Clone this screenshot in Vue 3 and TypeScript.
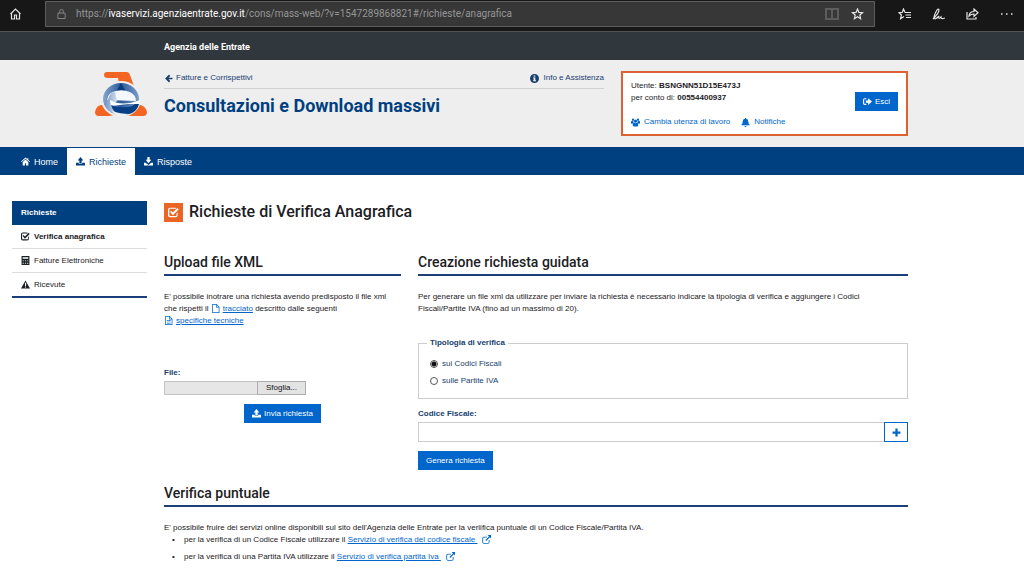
<script setup lang="ts">
import { h, ref } from 'vue'

const kind = ref<'cf' | 'iva'>('cf')
const code = ref('')

const paths: Record<string, string> = {
  left: 'M15 6.500H8l3-3L9 1 2 8l7 7 2-2.500-3-3h7z',
  home: 'M8 1 0 8l1 1 7-6 7 6 1-1-3-2.600V2h-2v1.600zM3 9v6h4v-4h2v4h4V9L8 4.600z',
  upload: 'M8 0 3 6h3v5h4V6h3zM0 10v5h16v-5h-5v2H5v-2z',
  download: 'M6 0v5H3l5 6 5-6h-3V0zM0 10v5h16v-5h-3l-5 4-5-4z',
  info: 'M8 0a8 8 0 1 0 0 16A8 8 0 0 0 8 0zM6.500 2.500h3v2.500h-3zM5.500 6h4v5h1.200v2H5.500v-2h1V8h-1z',
  users: 'M3.500 1a2 2 0 1 1 0 4 2 2 0 0 1 0-4zM12.500 1a2 2 0 1 1 0 4 2 2 0 0 1 0-4zM8 2.500a3 3 0 1 1 0 6 3 3 0 0 1 0-6zM0 9V7q0-2 2-2l2 .5Q4 8 5 9q-2 0-2.500 1H1q-1 0-1-1zM16 9V7q0-2-2-2l-2 .5q0 2.500-1 3.500 2 0 2.500 1H15q1 0 1-1zM3 13q0-4 2.500-4.500Q8 10 10.500 8.500 13 9 13 13q0 2-2 2H5q-2 0-2-2z',
  bell: 'M7 0h2v1.500q4 .5 4 5 0 4 2.500 5.500V13H.5v-1Q3 10.500 3 6.500q0-4.500 4-5zM6 14h4q-.3 2-2 2t-2-2z',
  exit: 'M6 2H3Q0 2 0 5v6q0 3 3 3h3v-2H3q-1 0-1-1V5q0-1 1-1h3zM9 2v4H5v4h4v4l7-6z',
  warn: 'M8 1 0 15h16zM7 5h2.200L9 10.500H7.200zM7 11.500h2v2H7z',
  calc: 'M1 0h14v16H1zM3 2v3h10V2zM3 7v1h2V7zM7 7v1h2V7zM11 7v1h2V7zM3 10v1h2v-1zM7 10v1h2v-1zM11 10v1h2v-1zM3 13v1h2v-1zM7 13v1h2v-1zM11 13v1h2v-1z',
  plus: 'M6 1h4v5h5v4h-5v5H6v-5H1V6h5z',
  check: 'M3 1h8l1 1-1 .5H3Q2 2.500 2 3.500v8q0 1.500 1.500 1.500H11q1.500 0 1.500-1.500V9L14 7.500V12q0 3-3 3H3q-3 0-3-3V4q0-3 3-3zM3 7l1.500-1.500L7 8l6.500-6.500L15.500 3.500 7 12z',
  file: 'M2 0h8l5 5v11H2zM3.300 1.300v13.400h10.400V6.300H9V1.300zM10.200 1.800V5h3.200z',
  doc: 'M2 0h8l5 5v11H2zM3.300 1.300v13.400h10.400V6.300H9V1.300zM10.200 1.800V5h3.200zM5 7.500h7v1.200H5zM5 10h7v1.200H5zM5 12.300h7v1.200H5z',
  ext: 'M3 3h6v1.500H3.500Q2 4.500 2 6v6.500Q2 14 3.500 14h7q1.500 0 1.500-1.500V9h1.500v3.500q0 3-3 3h-7q-3 0-3-3V6q0-3 2.500-3zM10 0h6v6l-2-2-6.500 6.500-1.500-1.500L12.500 2.500z',
}

const Icon = (props: { name: string }) => h('svg', { class: 'icon', viewBox: '0 0 16 16', 'aria-hidden': 'true' }, [
  h('path', { d: paths[props.name], 'fill-rule': 'evenodd', fill: 'currentColor' }),
])
Icon.props = ['name']

const menu = [
  { icon: 'check', label: 'Verifica anagrafica', active: true },
  { icon: 'calc', label: 'Fatture Elettroniche', active: false },
  { icon: 'warn', label: 'Ricevute', active: false },
]
</script>

<template>
  <div class="page">
    <div class="browser">
      <button class="tool home" aria-label="Home">
        <svg viewBox="0 0 12 12"><path d="M1 6 6 1l5 5M2 5v6h3V7h2v4h3V5" /></svg>
      </button>
      <div class="address">
        <svg class="lock" viewBox="0 0 10 12"><path d="M1 5h8v6H1zM3 5V3q0-2 2-2t2 2v2" /></svg>
        <span class="url">https://<b>ivaservizi.agenziaentrate.gov.it</b>/cons/mass-web/?v=1547289868821#/richieste/anagrafica</span>
        <svg class="book" viewBox="0 0 14 12"><path d="M1 1h12v10H1zM7 1v10" /></svg>
        <button class="tool" aria-label="Preferiti">
          <svg viewBox="0 0 12 12"><path d="m6 1 1.400 3.400L11 4.700 8.300 7l.8 3.700L6 8.800l-3.100 1.900L3.700 7 1 4.700l3.600-.3z" /></svg>
        </button>
      </div>
      <div class="tools">
        <button class="tool" aria-label="Hub">
          <svg viewBox="0 0 13 12"><path d="M7 4.400 5.500 1 4.200 4.400 1 4.700 3.400 7l-.8 3.700L6 8.500M7 4.500h6M7.500 7H13M8 9.500h5" /></svg>
        </button>
        <button class="tool" aria-label="Note">
          <svg viewBox="0 0 13 12"><path d="M1 11Q7 5 7 2q-.5-2-2 0Q2 7 2 10q1 2 4-1l1-1q-1 3 1 2l1-1q0 2 2 1.500L13 10" /></svg>
        </button>
        <button class="tool" aria-label="Condividi">
          <svg viewBox="0 0 13 12"><path d="M1 4v7h9V9M3 8q.5-4.500 5-4.500V1l4 3.800-4 3.700V6Q5 6 3 8z" /></svg>
        </button>
        <button class="tool dots" aria-label="Altro">
          <svg viewBox="0 0 13 12"><path d="M1 6h1.500M6 6h1.500M11 6h1.500" /></svg>
        </button>
      </div>
    </div>

    <div class="agency"><a href="#">Agenzia delle Entrate</a></div>

    <header class="header">
      <div class="brand">
        <svg class="logo" viewBox="0 0 52 46" role="img" aria-label="Agenzia delle Entrate">
          <defs>
            <linearGradient id="ring" x1="0" y1="0" x2="1" y2="0">
              <stop offset="0" stop-color="#86a6cf" />
              <stop offset="0.500" stop-color="#2a5a98" />
              <stop offset="1" stop-color="#7d9dc9" />
            </linearGradient>
            <linearGradient id="inner" x1="0" y1="0" x2="1" y2="0">
              <stop offset="0" stop-color="#6a91c4" />
              <stop offset="1" stop-color="#f4f7fb" />
            </linearGradient>
          </defs>
          <path d="M12 1h20q2 0 3 3l5 14-16-6-1-5H13q-4 0-4-3t3-3z" fill="#f26522" />
          <path d="M6 34h40q5 2 6 7 0 4-4 4H36L26 43 14 45H4q-4 0-4-4 1-6 6-7z" fill="#f26522" />
          <ellipse cx="26" cy="28" rx="20" ry="18" fill="#eee" />
          <ellipse cx="26" cy="28" rx="18" ry="16" fill="url(#ring)" />
          <path d="M26 12 21 21h10z" fill="#0a3b7d" />
          <path d="M12 29q1-8 9-9 7-2 14 1 6 3 6 9z" fill="#f4f7fb" />
          <path d="M9 33q4-3 5-7 1-4 6-6l2 10-4 4 8 10Q13 43 9 33z" fill="url(#inner)" />
          <path d="M15 29q12 7 30 0v4H33l-17 2z" fill="#fff" />
          <path d="M16 34q6 3 16 2 5 0 8-3h4q-3 11-17 11-8 0-11-10z" fill="#063f86" />
          <path d="M17 40q8 3 18 3l-9 2q-6 0-9-5z" fill="#eef2f8" />
        </svg>
      </div>
      <div class="titles">
        <div class="crumbs">
          <a href="#"><Icon name="left" />Fatture e Corrispettivi</a>
          <a href="#" class="help"><Icon name="info" />Info e Assistenza</a>
        </div>
        <h1>Consultazioni e Download massivi</h1>
      </div>
      <section class="user">
        <div class="who">
          <p>Utente: <b>BSNGNN51D15E473J</b></p>
          <p>per conto di: <b>00554400937</b></p>
          <div class="links">
            <a href="#"><Icon name="users" />Cambia utenza di lavoro</a>
            <a href="#"><Icon name="bell" />Notifiche</a>
          </div>
        </div>
        <button class="btn exit"><Icon name="exit" />Esci</button>
      </section>
    </header>

    <nav class="nav">
      <a href="#"><Icon name="home" />Home</a>
      <a href="#" class="current"><Icon name="upload" />Richieste</a>
      <a href="#"><Icon name="download" />Risposte</a>
    </nav>

    <div class="body">
      <aside class="side">
        <h2>Richieste</h2>
        <a v-for="m in menu" :key="m.label" href="#" :class="{ active: m.active }"><Icon :name="m.icon" />{{ m.label }}</a>
      </aside>

      <main class="main">
        <h2 class="title"><span class="badge"><Icon name="check" /></span>Richieste di Verifica Anagrafica</h2>

        <div class="columns">
          <section>
            <h3>Upload file XML</h3>
            <p class="text">
              E' possibile inotrare una richiesta avendo predisposto il file xml<br>
              che rispetti il
              <Icon name="file" class="inline" /><a href="#">tracciato</a> descritto dalle seguenti<br>
              <Icon name="doc" class="inline" /><a href="#">specifiche tecniche</a>
            </p>
            <form class="upload" @submit.prevent>
              <label for="file">File:</label>
              <div class="picker">
                <input id="file" type="text" readonly>
                <button type="button">Sfoglia...</button>
              </div>
              <button class="btn send"><Icon name="upload" />Invia richiesta</button>
            </form>
          </section>

          <section>
            <h3>Creazione richiesta guidata</h3>
            <p class="text wide">
              Per generare un file xml da utilizzare per inviare la richiesta è necessario indicare la tipologia di verifica e aggiungere i Codici Fiscali/Partite IVA (fino ad un massimo di 20).
            </p>
            <form class="guided" @submit.prevent>
              <fieldset>
                <legend>Tipologia di verifica</legend>
                <label><input v-model="kind" type="radio" value="cf">sui Codici Fiscali</label>
                <label><input v-model="kind" type="radio" value="iva">sulle Partite IVA</label>
              </fieldset>
              <label for="code" class="code-label">Codice Fiscale:</label>
              <div class="code">
                <input id="code" v-model="code" type="text">
                <button type="button" aria-label="Aggiungi"><Icon name="plus" /></button>
              </div>
              <button class="btn">Genera richiesta</button>
            </form>
          </section>
        </div>

        <section class="single">
          <h3>Verifica puntuale</h3>
          <p>E' possibile fruire dei servizi online disponibili sul sito dell'Agenzia delle Entrate per la veriifica puntuale di un Codice Fiscale/Partita IVA.</p>
          <ul>
            <li>per la verifica di un Codice Fiscale utilizzare il <a href="#">Servizio di verifica del codice fiscale&nbsp;</a><Icon name="ext" class="ext" /></li>
            <li>per la verifica di una Partita IVA utilizzare il <a href="#">Servizio di verifica partita Iva&nbsp;</a><Icon name="ext" class="ext" /></li>
          </ul>
        </section>
      </main>
    </div>
  </div>
</template>

<style>
body {
  margin: 0;
  background: #fff;
}
html {
  overflow: hidden;
}
</style>

<style scoped>
* {
  box-sizing: border-box;
}
.page {
  font: 8px/12px "Liberation Sans", Arial, sans-serif;
  color: #1c2024;
}
h1, h2, h3, p, ul {
  margin: 0;
}
button, input {
  font: inherit;
  padding: 0;
  border-radius: 0;
}
a {
  color: #06c;
}
.icon {
  width: 9px;
  height: 9px;
  flex: none;
}

.browser {
  display: flex;
  align-items: center;
  height: 31px;
  padding-bottom: 3px;
  background: #171717;
}
.tool {
  display: flex;
  border: 0;
  background: none;
}
.tool svg {
  width: 13px;
  height: 12px;
  fill: none;
  stroke: #e6e6e6;
  stroke-width: 1.200;
}
.dots svg {
  stroke-width: 1.600;
}
.home {
  width: 45px;
  padding-left: 9px;
}
.address {
  display: flex;
  align-items: center;
  flex: 1;
  height: 26px;
  padding: 0 10px 0 11px;
  border: 1px solid #5d5d5d;
  background: #373737;
}
.address .tool {
  margin-left: 12px;
}
.lock {
  width: 9px;
  height: 12px;
  margin-right: 10px;
  fill: none;
  stroke: #8c8c8c;
}
.book {
  width: 14px;
  height: 12px;
  fill: none;
  stroke: #5c5c5c;
  stroke-width: 2;
}
.url {
  flex: 1;
  font: 10px/16px Roboto, sans-serif;
  color: #969696;
  white-space: nowrap;
}
.url b {
  font-weight: 400;
  color: #fff;
}
.tools {
  display: flex;
  gap: 21px;
  padding: 0 11px 0 23px;
}

.agency {
  height: 29px;
  padding: 0 164px;
  border-top: 1px solid #545454;
  background: #30373d;
  font: 700 9px/30px Roboto, sans-serif;
}
.agency a {
  color: #fff;
  text-decoration: none;
}

.header {
  display: grid;
  grid-template-columns: 164px 440px minmax(0, 1fr);
  height: 87px;
  padding-right: 116px;
  background: #eee;
}
.logo {
  display: block;
  width: 52px;
  height: 46px;
  margin: 11px 0 0 95px;
}
.crumbs {
  display: flex;
  justify-content: space-between;
  height: 29px;
  padding-top: 12px;
  border-bottom: 1px solid #d0d0d0;
}
.crumbs a {
  display: flex;
  gap: 3px;
  align-items: center;
  height: 12px;
  color: #17406f;
  text-decoration: none;
}
.crumbs .help {
  gap: 5px;
}
h1 {
  margin-top: 4px;
  font: 700 18px/26px Roboto, sans-serif;
  color: #003f80;
  white-space: nowrap;
}
.user {
  display: flex;
  justify-content: space-between;
  align-items: flex-start;
  height: 65px;
  margin: 11px 0 0 17px;
  padding: 7px 8px 0;
  border: 2px solid #de6134;
  background: #fff;
}
.links {
  display: flex;
  gap: 11px;
  margin-top: 12px;
}
.links a {
  display: flex;
  align-items: center;
  gap: 4px;
  text-decoration: none;
}
.btn {
  display: inline-flex;
  align-items: center;
  justify-content: center;
  gap: 3px;
  height: 19px;
  padding: 0 8px;
  border: 0;
  background: #06c;
  color: #fff;
}
.exit {
  margin-top: 12px;
}

.nav {
  display: flex;
  height: 28px;
  padding-left: 12px;
  background: #003f80;
}
.nav a {
  display: flex;
  align-items: center;
  gap: 4px;
  padding: 0 9px;
  border-top: 1px solid #003f80;
  font-size: 9px;
  color: #fff;
  text-decoration: none;
}
.nav .current {
  background: #fff;
  color: #003f80;
}

.body {
  display: grid;
  grid-template-columns: 135px minmax(0, 1fr);
  gap: 17px;
  padding: 26px 116px 0 12px;
}
.side {
  align-self: start;
  border-bottom: 2px solid #1d3f77;
}
.side h2 {
  height: 24px;
  padding-left: 9px;
  background: #003f80;
  color: #fff;
  font: 700 8px/24px "Liberation Sans", Arial, sans-serif;
}
.side a {
  display: flex;
  align-items: center;
  gap: 4px;
  height: 24px;
  padding-left: 9px;
  border-bottom: 1px solid #ddd;
  color: #1c2024;
  text-decoration: none;
}
.side a:last-child {
  height: 23px;
  border-bottom: 0;
}
.side .active {
  font-weight: 700;
}

.title {
  display: flex;
  align-items: center;
  gap: 6px;
  height: 22px;
  font: 500 16px/22px Roboto, sans-serif;
}
.badge {
  display: flex;
  align-items: center;
  justify-content: center;
  width: 19px;
  height: 19px;
  background: #ea6524;
  color: #fff;
}
.badge .icon {
  width: 11px;
  height: 11px;
}
.columns {
  display: grid;
  grid-template-columns: 237px minmax(0, 1fr);
  gap: 17px;
  margin-top: 28px;
}
h3 {
  height: 25px;
  border-bottom: 2px solid #1d3f77;
  font: 500 14px/23px Roboto, sans-serif;
}
.text {
  margin-top: 15px;
}
.wide {
  padding-right: 28px;
}
.inline {
  margin-right: 3px;
  color: #06c;
  vertical-align: -2px;
}
.upload {
  display: flex;
  flex-direction: column;
  align-items: flex-start;
  margin-top: 40px;
}
.upload label, .code-label {
  font-weight: 700;
  color: #17406f;
}
.picker {
  display: flex;
  width: 142px;
  height: 14px;
  margin-top: 2px;
}
.picker input {
  flex: 1;
  min-width: 0;
  border: 1px solid #c4c4c4;
  border-right: 0;
  background: #e6e6e6;
}
.picker button {
  width: 49px;
  border: 1px solid #adadad;
  background: #e3e3e3;
  color: #111;
  line-height: 10px;
}
.send {
  margin: 9px 0 0 80px;
}
.guided {
  margin-top: 22px;
}
fieldset {
  display: flex;
  flex-direction: column;
  gap: 5px;
  margin: 0;
  padding: 9px 12px 11px 8px;
  border: 1px solid #ccc;
}
legend {
  padding: 0 3px;
  font-weight: 700;
  color: #17406f;
}
fieldset label {
  display: flex;
  align-items: center;
  gap: 4px;
  padding-left: 3px;
  color: #17406f;
}
fieldset input {
  appearance: none;
  width: 8px;
  height: 8px;
  margin: 0;
  border: 1px solid #555;
  border-radius: 50%;
  background: #fff;
}
fieldset input:checked {
  background: radial-gradient(#111 0 2px, #fff 3px);
}
.code-label {
  display: block;
  margin-top: 9px;
}
.code {
  display: flex;
  height: 20px;
  margin: 2px 0 9px;
}
.code input {
  flex: 1;
  min-width: 0;
  border: 1px solid #ccc;
  border-right: 0;
}
.code button {
  display: flex;
  align-items: center;
  justify-content: center;
  width: 24px;
  border: 1px solid #06c;
  background: #fff;
  color: #06c;
}
.single {
  margin-top: 12px;
}
.single p {
  margin-top: 15px;
}
ul {
  padding: 0 0 0 20px;
  list-style: none;
}
li {
  margin-bottom: 5px;
}
li::before {
  content: "•";
  display: inline-block;
  width: 12px;
  margin-left: -12px;
}
.ext {
  margin-left: 5px;
  color: #06c;
  vertical-align: -2px;
}
</style>
